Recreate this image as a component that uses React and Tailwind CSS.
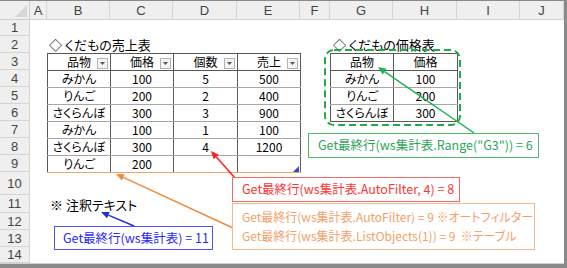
import React from "react"

const font = "[font-family:'Noto_Sans_CJK_JP',sans-serif] [font-feature-settings:'palt']"
const headFont = "[font-family:'Liberation_Sans',sans-serif]"

const letters = ["A", "B", "C", "D", "E", "F", "G", "H", "I", "J"]
const rowStarts = [
  "row-start-2", "row-start-3", "row-start-4", "row-start-5", "row-start-6", "row-start-7", "row-start-8",
  "row-start-9", "row-start-10", "row-start-11", "row-start-12", "row-start-13", "row-start-14", "row-start-15",
]

const sales = [
  ["みかん", "100", "5", "500"],
  ["りんご", "200", "2", "400"],
  ["さくらんぼ", "300", "3", "900"],
  ["みかん", "100", "1", "100"],
  ["さくらんぼ", "300", "4", "1200"],
  ["りんご", "200", "", ""],
]

const prices = [
  ["みかん", "100"],
  ["りんご", "200"],
  ["さくらんぼ", "300"],
]

const FilterButton = () => (
  <span className="absolute right-[2px] top-[4px] w-[11px] h-[11px] border border-[#b4b4b4] bg-[#f3f3f3] flex items-center justify-center">
    <svg width="5" height="3" viewBox="0 0 5 3">
      <path d="M0 0h5L2.5 3z" fill="#555" />
    </svg>
  </span>
)

const Arrow = ({ x1, y1, x2, y2, color }) => {
  const a = Math.atan2(y2 - y1, x2 - x1)
  const L = 8
  const W = 3.5
  const bx = x2 - L * Math.cos(a)
  const by = y2 - L * Math.sin(a)
  const p = `${x2},${y2} ${bx + W * Math.sin(a)},${by - W * Math.cos(a)} ${bx - W * Math.sin(a)},${by + W * Math.cos(a)}`
  return (
    <g>
      <line x1={x1} y1={y1} x2={bx} y2={by} stroke={color} strokeWidth="1.5" />
      <polygon points={p} fill={color} />
    </g>
  )
}

const App = () => {
  return (
    <div className={`w-[567px] h-[268px] bg-[#8a8a8a] pt-px pr-[3px] relative overflow-hidden text-[12px] text-black ${font}`}>
      <div className="grid grid-cols-[30px_17px_63px_63px_64px_63px_30px_63px_64px_63px_44px] grid-rows-[19px_16px_17px_17px_17px_17px_17px_17px_17px_17px_23px_18px_17px_17px_16px] bg-white border-b border-[#d0d0d0]">
        {/* corner */}
        <div className="col-start-1 row-start-1 bg-[#efefef] border-r border-b border-[#cfcfcf] relative">
          <svg className="absolute right-[2px] bottom-[2px]" width="12" height="12" viewBox="0 0 12 12">
            <path d="M12 0V12H0z" fill="#d6d6d6" />
          </svg>
        </div>
        {letters.map((l) => (
          <div key={l} className={`row-start-1 bg-[#efefef] border-r border-b border-[#d4d4d4] flex items-center justify-center text-[13px] leading-none text-[#444] ${headFont}`}>
            {l}
          </div>
        ))}
        {rowStarts.map((r, i) => (
          <div key={r} className={`col-start-1 ${r} bg-[#efefef] border-r border-b border-[#d4d4d4] flex items-center justify-center text-[13px] leading-none text-[#444] ${headFont}`}>
            {i + 1}
          </div>
        ))}

        <div className="col-start-3 col-span-4 row-start-3 flex items-center pl-[2px] whitespace-nowrap text-[13px] leading-none">◇ くだもの売上表</div>

        <table className="col-start-3 col-span-4 row-start-4 row-span-7 table-fixed border-collapse w-full h-full">
          <colgroup>
            <col className="w-[63px]" />
            <col className="w-[63px]" />
            <col className="w-[64px]" />
            <col className="w-[63px]" />
          </colgroup>
          <thead>
            <tr className="h-[17px]">
              {["品物", "価格", "個数", "売上"].map((h) => (
                <th key={h} className="relative font-normal border border-[#595959] p-0 text-center leading-none">
                  {h}
                  <FilterButton />
                </th>
              ))}
            </tr>
          </thead>
          <tbody>
            {sales.map((row, ri) => (
              <tr key={ri} className="h-[17px]">
                {row.map((c, ci) => (
                  <td
                    key={ci}
                    className={`border-x border-x-[#595959] border-b p-0 text-center leading-none ${ri === sales.length - 1 ? "border-b-[#f4a460]" : "border-b-[#a6a6a6]"}`}
                  >
                    {c}
                  </td>
                ))}
              </tr>
            ))}
          </tbody>
        </table>

        <div className="col-start-8 col-span-3 row-start-3 flex items-center pl-[3px] whitespace-nowrap text-[13px] leading-none">◇ くだもの価格表</div>

        <table className="col-start-8 col-span-2 row-start-4 row-span-4 table-fixed border-collapse w-full h-full">
          <colgroup>
            <col className="w-[63px]" />
            <col className="w-[64px]" />
          </colgroup>
          <thead>
            <tr className="h-[17px]">
              {["品物", "価格"].map((h) => (
                <th key={h} className="font-normal border border-[#595959] p-0 text-center leading-none">{h}</th>
              ))}
            </tr>
          </thead>
          <tbody>
            {prices.map((row, ri) => (
              <tr key={ri} className="h-[17px]">
                {row.map((c, ci) => (
                  <td key={ci} className={`border-x border-x-[#595959] border-b p-0 text-center leading-none ${ri === prices.length - 1 ? "border-b-[#595959]" : "border-b-[#a6a6a6]"}`}>
                    {c}
                  </td>
                ))}
              </tr>
            ))}
          </tbody>
        </table>

        <div className="col-start-3 col-span-4 row-start-12 flex items-center pl-[3px] whitespace-nowrap text-[13px] leading-none">※ 注釈テキスト</div>
      </div>

      <svg className="absolute inset-0 pointer-events-none" width="567" height="268" viewBox="0 0 567 268">
        <rect x="325" y="50" width="135" height="75" rx="9" fill="none" stroke="#1fab47" strokeWidth="2" strokeDasharray="7 4" />
        <path d="M293 172h6v-6z" fill="#2b4fbf" />
        <Arrow x1={474} y1={133} x2={378} y2={67} color="#1db34a" />
        <Arrow x1={235} y1={178} x2={211} y2={151} color="#ff2020" />
        <Arrow x1={233} y1={228} x2={116} y2={174} color="#f08a3c" />
        <Arrow x1={134} y1={226} x2={101} y2={212} color="#2030d0" />
      </svg>

      <div className="absolute left-[308px] top-[133px] w-[231px] h-[25px] bg-white border border-[#4cbb6c] flex items-center pl-[9px] text-[12.5px] text-[#2ea55a] whitespace-pre">
        Get最終行(ws集計表.Range("G3")) = 6
      </div>
      <div className="absolute left-[232px] top-[177px] w-[228px] h-[25px] bg-white border border-[#f06a6a] flex items-center pl-[9px] text-[12.5px] text-[#ff3535] whitespace-pre">
        Get最終行(ws集計表.AutoFilter, 4) = 8
      </div>
      <div className="absolute left-[232px] top-[203px] w-[303px] h-[47px] bg-white border border-[#f7b98a] flex flex-col justify-center gap-[1px] pl-[9px] text-[12px] text-[#f4a068] whitespace-pre leading-[18px]">
        <span>Get最終行(ws集計表.AutoFilter) = 9 ※オートフィルター</span>
        <span>Get最終行(ws集計表.ListObjects(1)) = 9  ※テーブル</span>
      </div>
      <div className="absolute left-[54px] top-[226px] w-[159px] h-[24px] bg-white border border-[#5050ff] flex items-center pl-[8px] text-[12.5px] text-[#2a2aff] whitespace-pre">
        Get最終行(ws集計表) = 11
      </div>
    </div>
  )
}

export default App
